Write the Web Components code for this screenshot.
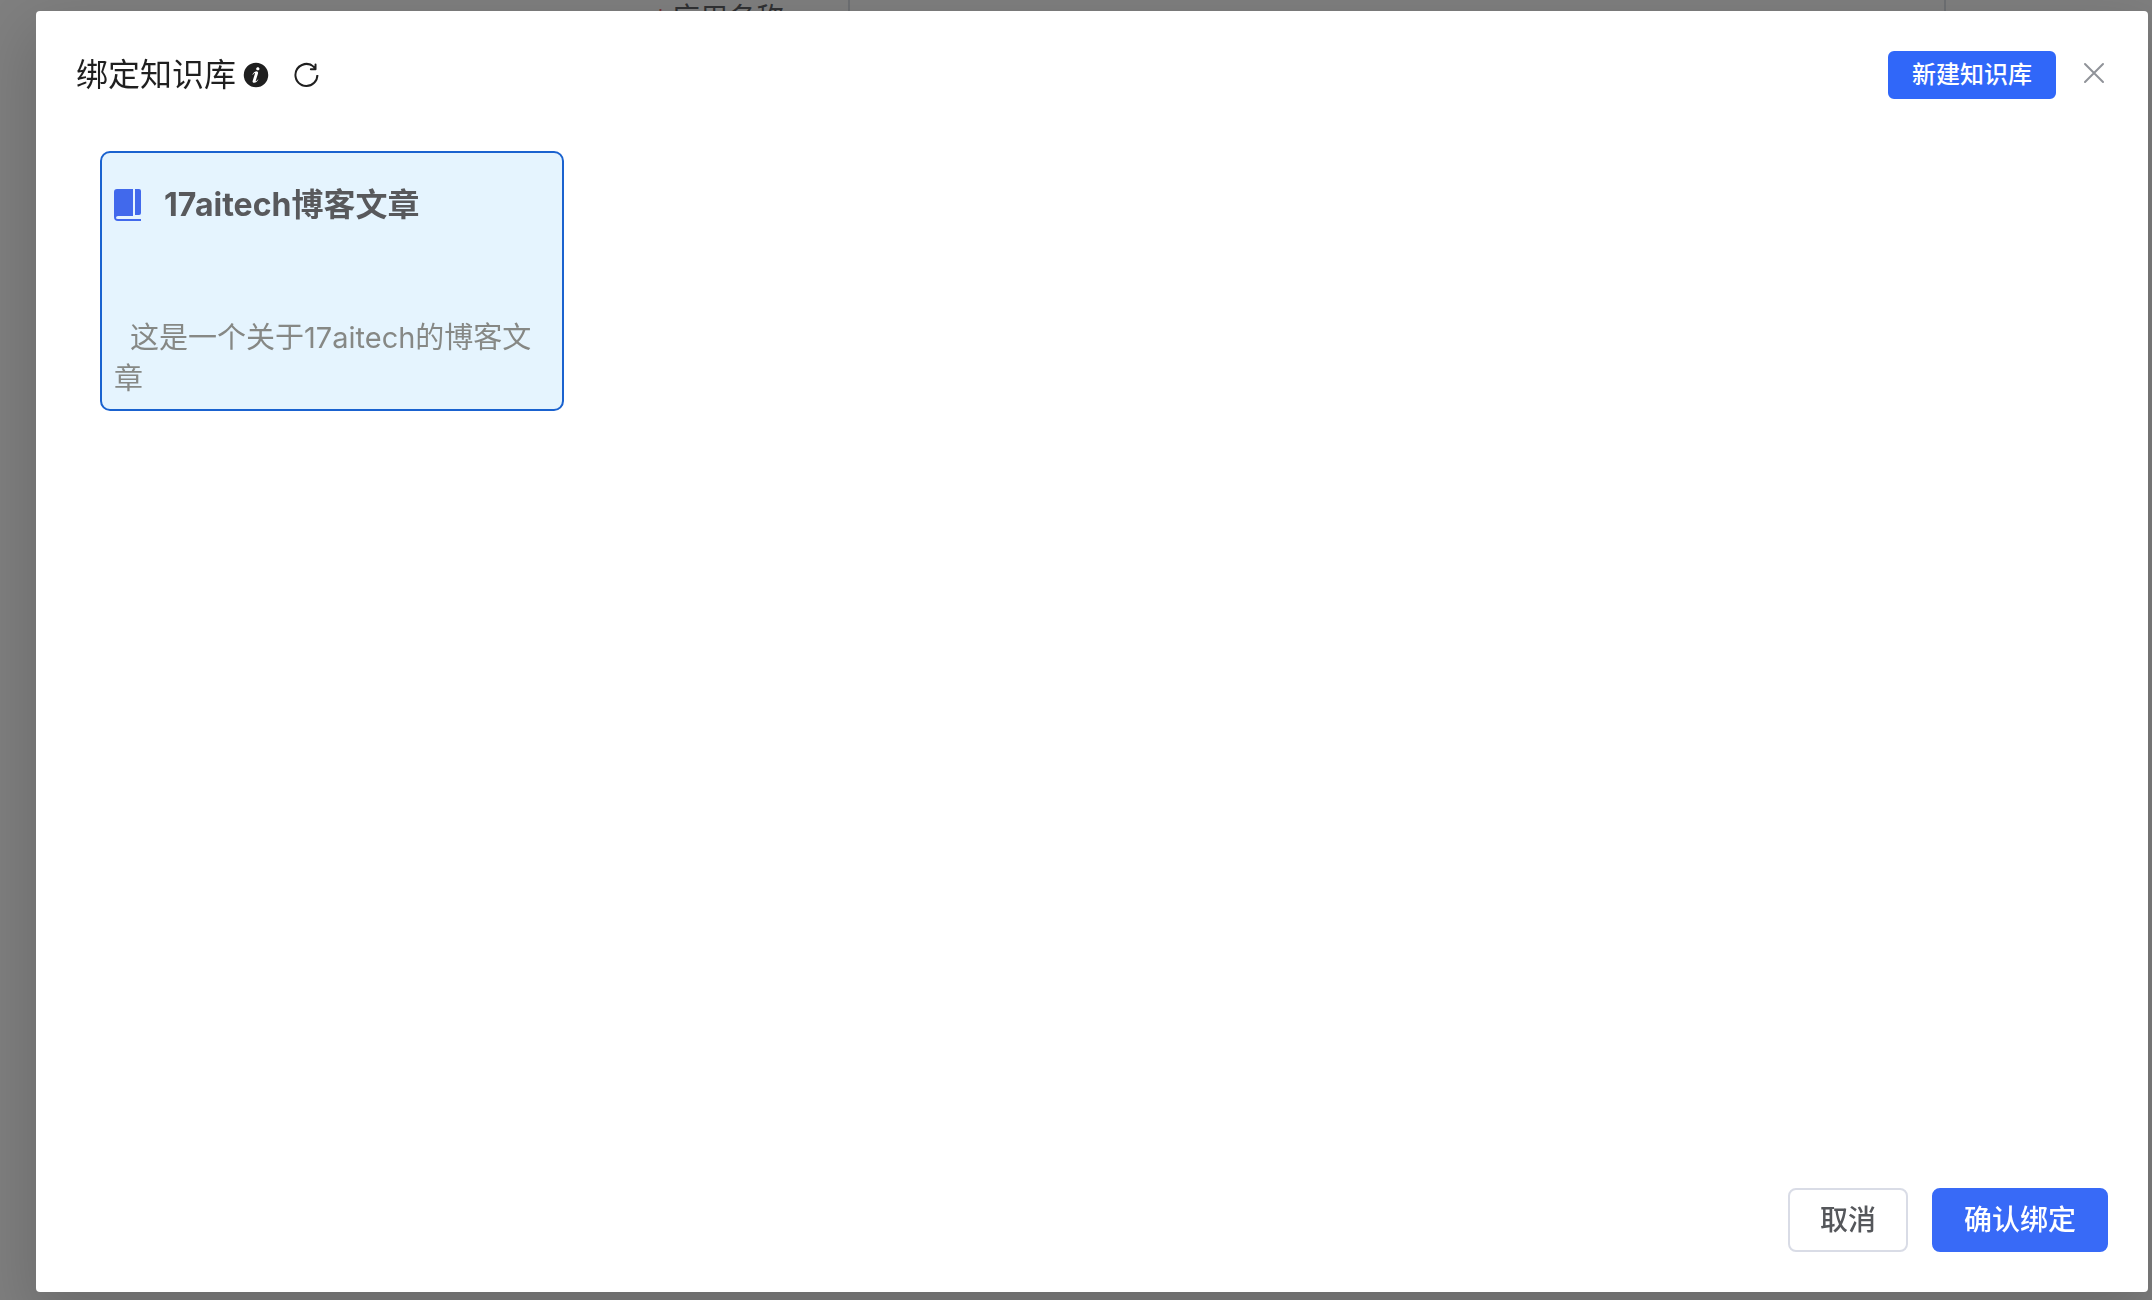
<!DOCTYPE html>
<html lang="zh-CN">
<head>
    <meta charset="UTF-8">
    <title>绑定知识库</title>
    <style>
        html, body {
            height: 100%;
            margin: 0;
        }

        body {
            overflow: hidden;
            background: #fff;
            color: #1f1f1f;
            font-family: Inter, "Noto Sans CJK SC", sans-serif;
        }
    </style>
</head>
<body>
    <app-form-row label="应用名称"></app-form-row>

    <kb-dialog heading="绑定知识库">
        <kb-button slot="actions" variant="primary" size="small">新建知识库</kb-button>
        <kb-card heading="17aitech博客文章">这是一个关于17aitech的博客文章</kb-card>
        <kb-button slot="footer">取消</kb-button>
        <kb-button slot="footer" variant="primary">确认绑定</kb-button>
    </kb-dialog>

    <script>
        // Form row of the page behind the dialog
        class AppFormRow extends HTMLElement {
            connectedCallback() {
                this.attachShadow({ mode: 'open' });
                this.shadowRoot.innerHTML = `
                    <style>
                        :host {
                            display: grid;
                            grid-template-columns: 848fr 1098fr 206fr;
                            align-items: center;
                            margin-top: -14px;
                        }

                        label {
                            padding-right: 64px;
                            text-align: right;
                            font-size: 28px;
                            line-height: 64px;
                            color: #606266;
                        }

                        label::before {
                            content: '*';
                            margin-right: 6px;
                            font-family: "Liberation Sans", sans-serif;
                            color: #f56c6c;
                        }

                        input {
                            box-sizing: border-box;
                            width: 100%;
                            height: 64px;
                            padding: 0 24px;
                            border: 2px solid #dcdfe6;
                            border-radius: 8px;
                            font: inherit;
                            font-size: 28px;
                        }
                    </style>
                    <label for="name">${this.getAttribute('label')}</label>
                    <input id="name" type="text">
                `;
            }
        }

        class KbButton extends HTMLElement {
            connectedCallback() {
                this.attachShadow({ mode: 'open' });
                this.shadowRoot.innerHTML = `
                    <style>
                        :host {
                            display: block;
                        }

                        button {
                            display: block;
                            box-sizing: border-box;
                            height: 64px;
                            padding: 0 30px;
                            border: 2px solid #d9dce6;
                            border-radius: 8px;
                            background: #fff;
                            color: #55575b;
                            font: inherit;
                            font-size: 28px;
                            font-weight: 500;
                            line-height: 60px;
                            cursor: pointer;
                        }

                        :host([variant="primary"]) button {
                            border-color: #386af7;
                            background: #386af7;
                            color: #fff;
                        }

                        :host([size="small"]) button {
                            height: 48px;
                            padding: 0 22px;
                            border-color: #3067f9;
                            border-radius: 6px;
                            background: #3067f9;
                            font-size: 24px;
                            line-height: 44px;
                        }
                    </style>
                    <button type="button"><slot></slot></button>
                `;
            }
        }

        class KbCard extends HTMLElement {
            connectedCallback() {
                this.attachShadow({ mode: 'open' });
                this.shadowRoot.innerHTML = `
                    <style>
                        :host {
                            display: flex;
                            flex-direction: column;
                            justify-content: space-between;
                            box-sizing: border-box;
                            width: 464px;
                            min-height: 260px;
                            padding: 28px 12px 10px;
                            border: 2px solid #1a62cf;
                            border-radius: 10px;
                            background: #e5f4fe;
                        }

                        .title {
                            display: flex;
                            align-items: center;
                            gap: 22px;
                        }

                        h3 {
                            margin: 0;
                            font-size: 32px;
                            font-weight: 700;
                            line-height: 48px;
                            color: #58595c;
                        }

                        p {
                            margin: 0;
                            font-size: 29px;
                            line-height: 41px;
                            text-indent: 16px;
                            color: #868885;
                        }
                    </style>
                    <div class="title">
                        <svg width="28" height="32" viewBox="0 0 28 32" fill="#4169ec" aria-hidden="true">
                            <path d="M3 0H19V27H4Q2 27 2 29Q2 30 4 30H27V32H4Q0 32 0 28V3Q0 0 3 0Z"/>
                            <path d="M21 0H25Q27 0 27 2V24Q27 26 25 26H21Z"/>
                        </svg>
                        <h3>${this.getAttribute('heading')}</h3>
                    </div>
                    <p><slot></slot></p>
                `;
            }
        }

        class KbDialog extends HTMLElement {
            connectedCallback() {
                this.attachShadow({ mode: 'open' });
                this.shadowRoot.innerHTML = `
                    <style>
                        :host {
                            position: fixed;
                            inset: 0;
                            display: flex;
                            padding: 11px 4px 8px 36px;
                            background: rgba(0, 0, 0, 0.5);
                        }

                        section {
                            flex: 1;
                            display: flex;
                            flex-direction: column;
                            padding: 40px;
                            border-radius: 4px;
                            background: #fff;
                            box-shadow: 0 24px 64px 8px rgba(0, 0, 0, 0.16);
                        }

                        header {
                            display: flex;
                            align-items: flex-start;
                            gap: 24px;
                        }

                        .heading {
                            flex: 1;
                            display: flex;
                            align-items: center;
                            height: 48px;
                        }

                        h2 {
                            margin: 0 6px 0 0;
                            font-size: 32px;
                            font-weight: 400;
                            line-height: 48px;
                        }

                        button {
                            display: flex;
                            align-items: center;
                            justify-content: center;
                            padding: 0;
                            border: 0;
                            background: none;
                            color: inherit;
                            cursor: pointer;
                        }

                        .refresh {
                            margin-left: 20px;
                        }

                        .close {
                            width: 28px;
                            height: 44px;
                            color: #909399;
                        }

                        main {
                            flex: 1;
                            display: flex;
                            flex-wrap: wrap;
                            align-items: flex-start;
                            gap: 24px;
                            padding: 52px 24px;
                        }

                        footer {
                            display: flex;
                            justify-content: flex-end;
                            gap: 24px;
                        }
                    </style>
                    <section role="dialog" aria-labelledby="heading">
                        <header>
                            <div class="heading">
                                <h2 id="heading">${this.getAttribute('heading')}</h2>
                                <svg width="28" height="28" viewBox="0 0 1024 1024" fill="currentColor" aria-hidden="true">
                                    <path d="M512 64a448 448 0 1 1 0 896.064A448 448 0 0 1 512 64m67.2 275.072c33.28 0 60.288-23.104 60.288-57.344s-27.072-57.344-60.288-57.344c-33.28 0-60.16 23.104-60.16 57.344s26.88 57.344 60.16 57.344M590.912 699.2c0-6.848 2.368-24.64 1.024-34.752l-52.608 60.544c-10.88 11.456-24.512 19.392-30.912 17.28a12.992 12.992 0 0 1-8.256-14.72l87.68-276.992c7.168-35.136-12.544-67.2-54.336-71.296-44.096 0-108.992 44.736-148.48 101.504 0 6.784-1.28 23.68.064 33.792l52.544-60.608c10.88-11.328 23.552-19.328 29.952-17.152a12.8 12.8 0 0 1 7.808 16.128L388.48 728.576c-10.048 32.256 8.96 63.872 55.04 71.04 67.84 0 107.904-43.648 147.456-100.416z"/>
                                </svg>
                                <button class="refresh" type="button" aria-label="刷新">
                                    <svg width="32" height="32" viewBox="0 0 1024 1024" fill="currentColor">
                                        <path d="M784.512 230.272v-50.56a32 32 0 1 1 64 0v149.056a32 32 0 0 1-32 32H667.52a32 32 0 1 1 0-64h92.992A320 320 0 1 0 524.8 833.152a320 320 0 0 0 320-320h64a384 384 0 0 1-384 384 384 384 0 0 1-384-384 384 384 0 0 1 643.712-282.88z"/>
                                    </svg>
                                </button>
                            </div>
                            <slot name="actions"></slot>
                            <button class="close" type="button" aria-label="关闭">
                                <svg width="28" height="28" viewBox="0 0 28 28" fill="none" stroke="currentColor" stroke-width="2" stroke-linecap="round">
                                    <path d="M5 5 23 23M23 5 5 23"/>
                                </svg>
                            </button>
                        </header>
                        <main><slot></slot></main>
                        <footer><slot name="footer"></slot></footer>
                    </section>
                `;
            }
        }

        customElements.define('app-form-row', AppFormRow);
        customElements.define('kb-button', KbButton);
        customElements.define('kb-card', KbCard);
        customElements.define('kb-dialog', KbDialog);
    </script>
</body>
</html>
